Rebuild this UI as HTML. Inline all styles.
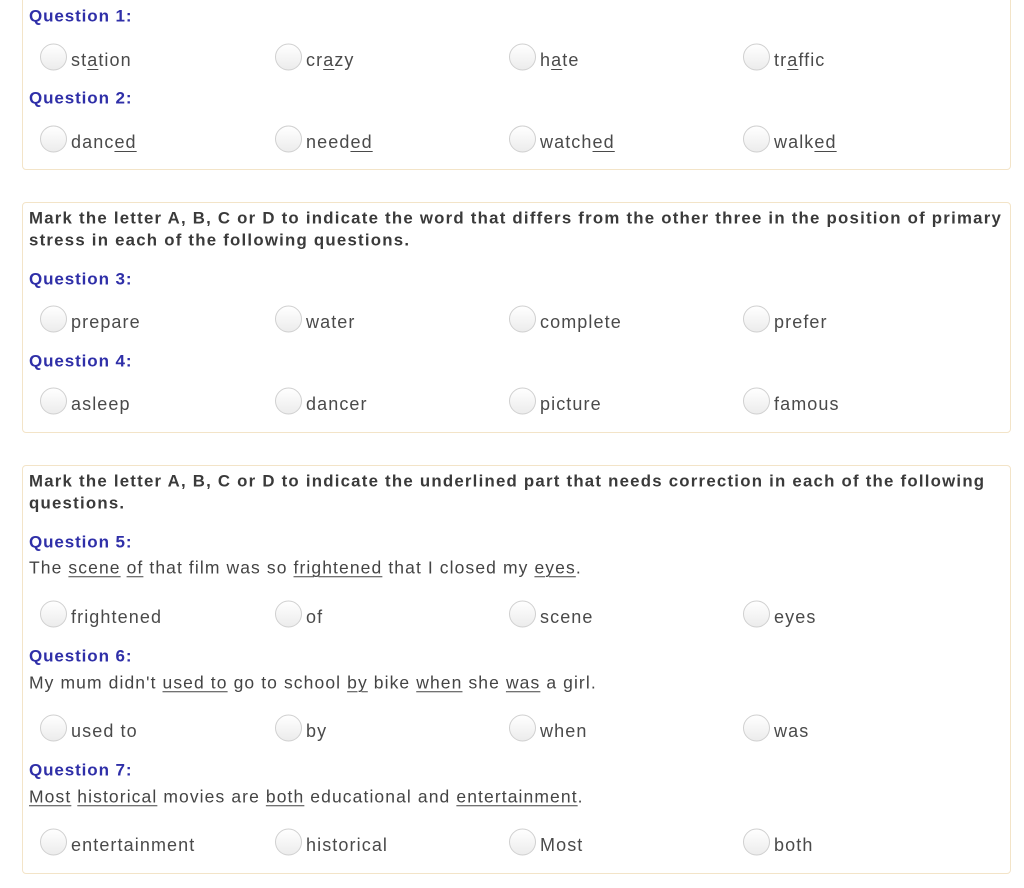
<!DOCTYPE html>
<html><head><meta charset="utf-8"><style>
body{margin:0;width:1024px;height:888px;background:#fff;position:relative;overflow:hidden;font-family:"Liberation Sans",sans-serif;color:#444}
.box{position:absolute;left:22px;width:987px;border:1px solid #f3e4c8;border-radius:4px;background:#fff}
.t{position:absolute;white-space:nowrap;line-height:1;transform:translateY(-50%)}
.q{left:29px;font-weight:bold;color:#2f2fa8;font-size:17px;letter-spacing:0.9px}
.i{left:29px;font-weight:bold;color:#3a3a3a;font-size:16.8px;letter-spacing:1.24px}
.s{left:29px;font-size:17.5px;color:#444;letter-spacing:1.1px}
.o{font-size:18px;color:#4a4a4a;letter-spacing:1.1px}
.r{position:absolute;width:25px;height:25px;border-radius:50%;border:1px solid #d0d0d0;background:linear-gradient(#fff,#ececec);transform:translateY(-50%)}
u{text-decoration-thickness:1px;text-underline-offset:3px}
</style></head><body>
<div class="box" style="top:-5px;height:173px"></div>
<div class="box" style="top:202px;height:229px"></div>
<div class="box" style="top:465px;height:407px"></div>

<div class="t q" style="top:16px">Question 1:</div>
<div class="r" style="left:40px;top:57px"></div><div class="t o" style="left:71px;top:60px">st<u>a</u>tion</div>
<div class="r" style="left:275px;top:57px"></div><div class="t o" style="left:306px;top:60px">cr<u>a</u>zy</div>
<div class="r" style="left:509px;top:57px"></div><div class="t o" style="left:540px;top:60px">h<u>a</u>te</div>
<div class="r" style="left:743px;top:57px"></div><div class="t o" style="left:774px;top:60px">tr<u>a</u>ffic</div>
<div class="t q" style="top:98px">Question 2:</div>
<div class="r" style="left:40px;top:139px"></div><div class="t o" style="left:71px;top:142px">danc<u>ed</u></div>
<div class="r" style="left:275px;top:139px"></div><div class="t o" style="left:306px;top:142px">need<u>ed</u></div>
<div class="r" style="left:509px;top:139px"></div><div class="t o" style="left:540px;top:142px">watch<u>ed</u></div>
<div class="r" style="left:743px;top:139px"></div><div class="t o" style="left:774px;top:142px">walk<u>ed</u></div>

<div class="t i" style="top:219px">Mark the letter A, B, C or D to indicate the word that differs from the other three in the position of primary</div>
<div class="t i" style="top:241px">stress in each of the following questions.</div>
<div class="t q" style="top:279px">Question 3:</div>
<div class="r" style="left:40px;top:319px"></div><div class="t o" style="left:71px;top:322px">prepare</div>
<div class="r" style="left:275px;top:319px"></div><div class="t o" style="left:306px;top:322px">water</div>
<div class="r" style="left:509px;top:319px"></div><div class="t o" style="left:540px;top:322px">complete</div>
<div class="r" style="left:743px;top:319px"></div><div class="t o" style="left:774px;top:322px">prefer</div>
<div class="t q" style="top:361px">Question 4:</div>
<div class="r" style="left:40px;top:401px"></div><div class="t o" style="left:71px;top:404px">asleep</div>
<div class="r" style="left:275px;top:401px"></div><div class="t o" style="left:306px;top:404px">dancer</div>
<div class="r" style="left:509px;top:401px"></div><div class="t o" style="left:540px;top:404px">picture</div>
<div class="r" style="left:743px;top:401px"></div><div class="t o" style="left:774px;top:404px">famous</div>

<div class="t i" style="top:482px">Mark the letter A, B, C or D to indicate the underlined part that needs correction in each of the following</div>
<div class="t i" style="top:504px">questions.</div>
<div class="t q" style="top:542px">Question 5:</div>
<div class="t s" style="top:568px">The <u>scene</u> <u>of</u> that film was so <u>frightened</u> that I closed my <u>eyes</u>.</div>
<div class="r" style="left:40px;top:614px"></div><div class="t o" style="left:71px;top:617px">frightened</div>
<div class="r" style="left:275px;top:614px"></div><div class="t o" style="left:306px;top:617px">of</div>
<div class="r" style="left:509px;top:614px"></div><div class="t o" style="left:540px;top:617px">scene</div>
<div class="r" style="left:743px;top:614px"></div><div class="t o" style="left:774px;top:617px">eyes</div>
<div class="t q" style="top:656px">Question 6:</div>
<div class="t s" style="top:683px">My mum didn't <u>used to</u> go to school <u>by</u> bike <u>when</u> she <u>was</u> a girl.</div>
<div class="r" style="left:40px;top:728px"></div><div class="t o" style="left:71px;top:731px">used to</div>
<div class="r" style="left:275px;top:728px"></div><div class="t o" style="left:306px;top:731px">by</div>
<div class="r" style="left:509px;top:728px"></div><div class="t o" style="left:540px;top:731px">when</div>
<div class="r" style="left:743px;top:728px"></div><div class="t o" style="left:774px;top:731px">was</div>
<div class="t q" style="top:770px">Question 7:</div>
<div class="t s" style="top:797px"><u>Most</u> <u>historical</u> movies are <u>both</u> educational and <u>entertainment</u>.</div>
<div class="r" style="left:40px;top:842px"></div><div class="t o" style="left:71px;top:845px">entertainment</div>
<div class="r" style="left:275px;top:842px"></div><div class="t o" style="left:306px;top:845px">historical</div>
<div class="r" style="left:509px;top:842px"></div><div class="t o" style="left:540px;top:845px">Most</div>
<div class="r" style="left:743px;top:842px"></div><div class="t o" style="left:774px;top:845px">both</div>
</body></html>
